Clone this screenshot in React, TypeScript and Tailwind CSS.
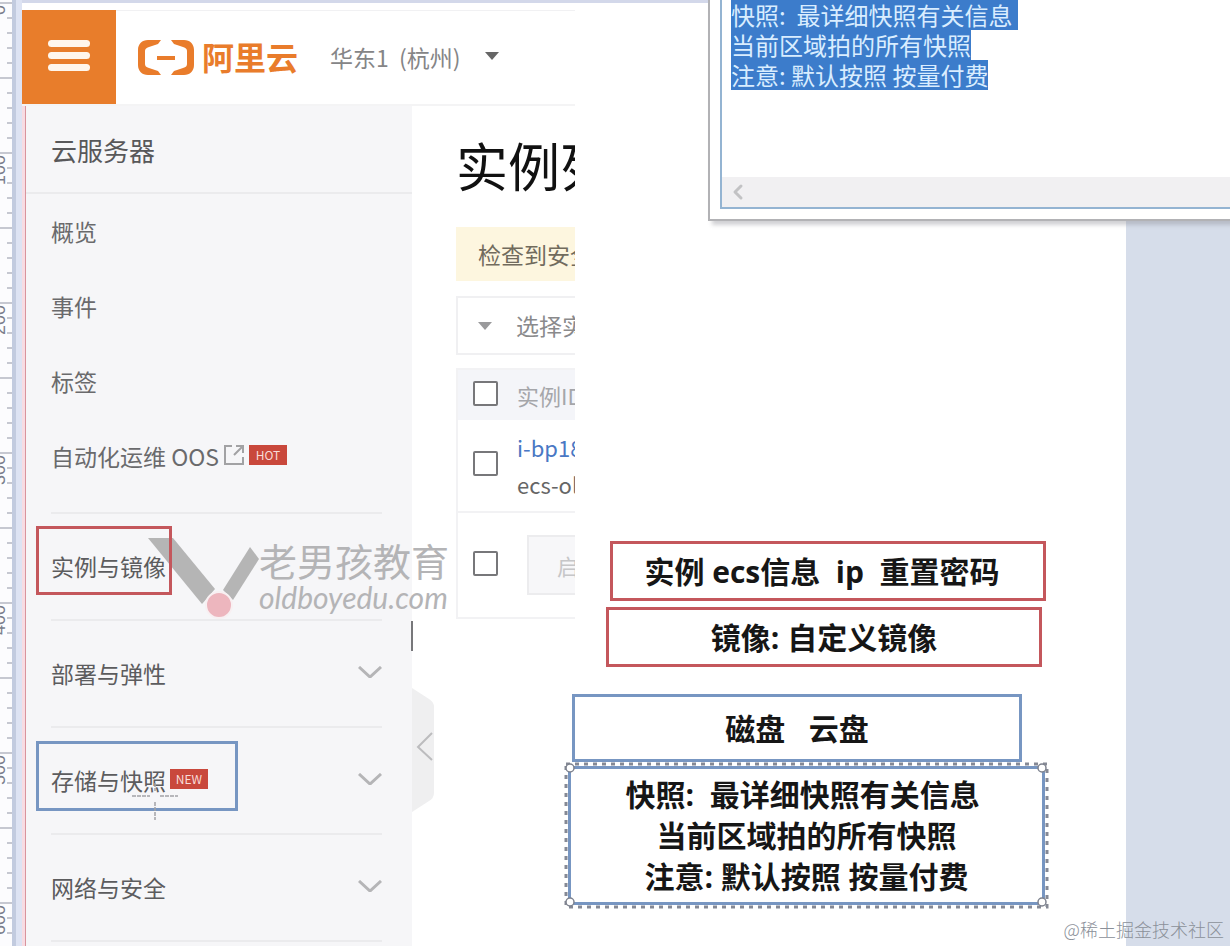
import { ChevronLeft } from 'lucide-react'
import { clsx } from 'clsx'
import React from 'react'

const NAV_ITEMS = [
    { label: '概览' },
    { label: '事件' },
    { label: '标签' },
    { label: '自动化运维 OOS', external: true, badge: 'HOT' },
]

const NAV_GROUPS = [
    { label: '实例与镜像', expandable: false },
    { label: '部署与弹性', expandable: true },
    { label: '存储与快照', expandable: true, badge: 'NEW' },
    { label: '网络与安全', expandable: true },
]

const NOTE_LINES = ['快照:  最详细快照有关信息 ', '当前区域拍的所有快照', '注意: 默认按照 按量付费']

const RULER_TICKS = Array.from({ length: 64 }, (_, i) => ({ y: 3 + i * 15, major: i % 5 === 0 }))
const RULER_LABELS = [0, 100, 200, 300, 400, 500, 600]

const Ruler = () => (
    <svg className="h-[946px] w-3 shrink-0" viewBox="0 0 12 946" aria-hidden="true">
        {RULER_TICKS.map(({ y, major }) => (
            <line key={y} x1={major ? 0 : 7} x2="12" y1={y} y2={y} stroke="#b4b7c2" strokeWidth="1.5" />
        ))}
        {RULER_LABELS.map((value, i) => (
            <text
                key={value}
                transform={`translate(5 ${i * 150 + 5}) rotate(-90)`}
                textAnchor="end"
                fontSize="18"
                fill="#7b7f8c"
                fontFamily="Liberation Sans, sans-serif"
            >
                {value}
            </text>
        ))}
    </svg>
)

const Badge = ({ children }: { children: React.ReactNode }) => (
    <span className="mb-1 flex h-5 w-[38px] items-center justify-center bg-[#c9483c] text-xs text-[#f8dcd8]">
        {children}
    </span>
)

const ExternalIcon = () => (
    <svg className="mb-1 h-[22px] w-[22px]" viewBox="0 0 22 22" fill="none" stroke="#a2a2a4" strokeWidth="2" aria-hidden="true">
        <path d="M9 2H2v18h18v-7" />
        <path d="M13 2h7v7M20 2l-9 9" />
    </svg>
)

const Logo = () => (
    <a href="#" aria-label="阿里云" className="flex items-center gap-2 text-[#e97c2b]">
        <svg className="h-9 w-14" viewBox="0 0 56 36" fill="currentColor" aria-hidden="true">
            <path d="M23 0H10C4 0 0 4 0 10v15c0 6 4 10 10 10h13l-3-4-9-3c-3-1-4-2-4-4V11c0-2 1-3 4-4l9-3z" />
            <path d="M33 0h13c6 0 10 4 10 10v15c0 6-4 10-10 10H33l3-4 9-3c3-1 4-2 4-4V11c0-2-1-3-4-4l-9-3z" />
            <path d="M19 16h18v4H19z" />
        </svg>
        <span className="pb-1 text-[32px] leading-9 font-bold">阿里云</span>
    </a>
)

const Header = () => (
    <header className="flex h-[106px] shrink-0 items-stretch border-b-2 border-[#f4f4f5] pt-[10px]">
        <button type="button" aria-label="菜单" className="flex w-[94px] flex-col items-center justify-center gap-[5px] bg-[#e87d2b] pb-1">
            <span className="h-[7px] w-[42px] rounded-sm bg-[#fff6ec]" />
            <span className="h-[7px] w-[42px] rounded-sm bg-[#fff6ec]" />
            <span className="h-[7px] w-[42px] rounded-sm bg-[#fff6ec]" />
        </button>
        <div className="flex flex-1 items-center border-t border-[#f1f1f3] pl-[22px]">
            <Logo />
            <button type="button" className="ml-8 flex items-center gap-6 text-[23px] text-[#858587]">
                <span className="whitespace-pre">华东1  (杭州)</span>
                <svg className="mb-1 h-2 w-[14px]" viewBox="0 0 14 8" aria-hidden="true">
                    <path d="M0 0h14L7 8z" fill="#666" />
                </svg>
            </button>
        </div>
    </header>
)

const Sidebar = () => (
    <aside className="w-[386px] shrink-0 bg-[#f6f6f8] text-[#6a6a6c]">
        <h2 className="flex h-[88px] items-center border-b-2 border-[#ebebed] pl-[25px] text-[26px] text-[#58585a]">
            云服务器
        </h2>
        <nav aria-label="云服务器" className="pr-[30px] pl-[25px] text-[23px]">
            <ul className="mb-[18px]">
                {NAV_ITEMS.map((item) => (
                    <li key={item.label}>
                        <a href="#" className="flex h-[75px] items-center gap-1">
                            {item.label}
                            {item.external && <ExternalIcon />}
                            {item.badge && <Badge>{item.badge}</Badge>}
                        </a>
                    </li>
                ))}
            </ul>
            <ul className="border-b-2 border-[#ebebed]">
                {NAV_GROUPS.map((group) => (
                    <li key={group.label} className="border-t-2 border-[#ebebed]">
                        <button type="button" className="flex h-[105px] w-full items-center gap-1 text-[#5c5c5e]">
                            {group.label}
                            {group.badge && <Badge>{group.badge}</Badge>}
                            {group.expandable && (
                                <svg className="mb-1 ml-auto h-3 w-6" viewBox="0 0 24 12" fill="none" stroke="#b5b5b7" strokeWidth="3" aria-hidden="true">
                                    <path d="M1 1l11 10L23 1" />
                                </svg>
                            )}
                        </button>
                    </li>
                ))}
            </ul>
        </nav>
    </aside>
)

const RowCheckbox = ({ label }: { label: string }) => (
    <input
        type="checkbox"
        aria-label={label}
        className="block size-[25px] appearance-none rounded-xs border-2 border-[#77777a] bg-white"
    />
)

const InstanceList = () => (
    <section className="min-w-0 flex-1 overflow-hidden pl-[44px] whitespace-nowrap">
        <h1 className="mt-[26px] h-[95px] text-[52px] leading-[66px] text-[#111]">实例列表</h1>
        <p className="flex h-[54px] items-center bg-[#fdf6df] pl-[22px] text-[23px] text-[#716b5d]">检查到安全组</p>
        <button
            type="button"
            className="mt-[15px] flex h-[59px] w-[300px] items-center gap-6 border-2 border-[#f0f0f2] pl-5 text-[23px] text-[#8a8a8c]"
        >
            <svg className="h-2 w-[14px]" viewBox="0 0 14 8" aria-hidden="true">
                <path d="M0 0h14L7 8z" fill="#9a9a9c" />
            </svg>
            选择实例
        </button>
        <table className="mt-[13px] w-[300px] border-collapse border-2 border-[#f2f2f4] text-left">
            <thead>
                <tr className="h-[51px] bg-[#f4f5f9]">
                    <th className="w-[60px] pb-1 pl-[15px]">
                        <RowCheckbox label="全选" />
                    </th>
                    <th className="text-[22px] font-normal text-[#a5a6aa]">实例ID</th>
                </tr>
            </thead>
            <tbody>
                <tr className="h-[92px] border-b-2 border-[#f2f2f4]">
                    <td className="pb-1 pl-[15px]">
                        <RowCheckbox label="选择实例" />
                    </td>
                    <td className="text-[22px] leading-[37px]">
                        <a href="#" className="block text-[#4a78c4]">i-bp18</a>
                        <span className="block text-[#666]">ecs-oldboy</span>
                    </td>
                </tr>
                <tr className="h-[106px]">
                    <td className="pb-1 pl-[15px]">
                        <RowCheckbox label="批量选择" />
                    </td>
                    <td className="pl-[10px]">
                        <button type="button" disabled className="h-[60px] w-[120px] border-2 border-[#ececee] bg-[#f7f7f9] pl-[28px] text-left text-[22px] text-[#c6c6c8]">
                            启动
                        </button>
                    </td>
                </tr>
            </tbody>
        </table>
    </section>
)

const NoteWindow = () => (
    <div className="absolute top-0 right-0 left-[708px] border-b-2 border-l-2 border-[#b2b2b5] bg-white pb-[10px] pl-[10px] shadow-[4px_4px_4px_#8c8c9466]">
        <div className="border-b-2 border-l-2 border-[#94b4d2]">
            <div
                role="textbox"
                aria-multiline="true"
                aria-label="备注"
                className="h-[177px] pl-[9px] text-[24px] leading-[30px] text-[#d9edff]"
            >
                {NOTE_LINES.map((line) => (
                    <p key={line} className="h-[30px] w-fit bg-[#3c7ccb] whitespace-pre">
                        {line}
                    </p>
                ))}
            </div>
            <div className="flex h-[30px] items-center bg-[#f1f0f2] pl-1">
                <button type="button" aria-label="向左滚动">
                    <ChevronLeft className="size-6 text-[#c2c2c4]" strokeWidth={3} />
                </button>
            </div>
        </div>
    </div>
)

type CalloutProps = {
    color: 'red' | 'blue'
    className: string
    children?: React.ReactNode
}

const Callout = ({ color, className, children }: CalloutProps) => (
    <div
        className={clsx(
            "absolute flex flex-col items-center justify-center border-3 font-['Open_Sans','Noto_Sans_CJK_SC',sans-serif] text-[30px] leading-[41px] font-bold whitespace-pre text-[#161616]",
            color === 'red' ? 'border-[#c4575c]' : 'border-[#7796c2]',
            className
        )}
    >
        {children}
    </div>
)

const SelectionFrame = () => (
    <svg className="absolute top-[761px] left-[563px] h-[150px] w-[488px]" viewBox="0 0 488 150" fill="none" aria-hidden="true">
        <rect x="3" y="3" width="481" height="143" stroke="#858995" strokeWidth="3" strokeDasharray="4 5" />
        {[[7, 7], [479, 7], [7, 141], [479, 141]].map(([cx, cy]) => (
            <circle key={`${cx}-${cy}`} cx={cx} cy={cy} r="4" fill="#fff" stroke="#7d828e" strokeWidth="1.5" />
        ))}
    </svg>
)

const SchoolWatermark = () => (
    <div className="pointer-events-none absolute top-[536px] left-[147px] flex items-start text-[#b4b4b6]">
        <svg className="h-[84px] w-[112px]" viewBox="0 0 112 84" aria-hidden="true">
            <path d="M1 2h25l42 51-13 15z" fill="#b5b5b5" />
            <path d="M103 11l9 12-26 41-10-10z" fill="#b5b5b5" />
            <circle cx="72" cy="69" r="13" fill="#edb6be" stroke="#f8f0f2" strokeWidth="2" />
        </svg>
        <div className="pt-1">
            <p className="text-[38px] leading-[40px]">老男孩教育</p>
            <p className="font-['Lato',sans-serif] text-[30px] leading-[34px] italic">oldboyedu.com</p>
        </div>
    </div>
)

export default function App() {
    return (
        <div className="relative flex min-h-screen w-full items-stretch overflow-hidden bg-white font-['Noto_Sans_CJK_SC',sans-serif]">
            <div className="w-3 shrink-0 bg-[#fcfcfe]">
                <Ruler />
            </div>
            <div className="w-1 shrink-0 bg-[#c2cbdf]" />
            <div className="w-[6px] shrink-0 bg-[#dde3f3]" />

            <div className="flex w-[553px] shrink-0 flex-col border-t-3 border-[#d3d8ea]">
                <div className="-mt-[3px] flex flex-1 flex-col">
                    <Header />
                    <div className="flex flex-1">
                        <div className="w-[3px] shrink-0 bg-[#f7dce3]" />
                        <div className="w-px shrink-0 bg-[#d9949d]" />
                        <Sidebar />
                        <InstanceList />
                    </div>
                </div>
            </div>
            <main className="flex-1 border-t-3 border-[#d3d8ea]" />
            <div className="w-[104px] shrink-0 bg-[#d6ddea]" />

            <NoteWindow />

            {/* sidebar collapse handle */}
            <button type="button" aria-label="收起" className="absolute top-[688px] left-[412px]">
                <svg className="h-[124px] w-[22px]" viewBox="0 0 22 124" fill="none" aria-hidden="true">
                    <path d="M0 0l17 11q5 3 5 8v86q0 5-5 8L0 124z" fill="#efeff0" />
                    <path d="M20 45L6 59l14 13" stroke="#bcbcbe" strokeWidth="2" />
                </svg>
            </button>

            <SchoolWatermark />
            <div className="absolute top-[621px] left-[411px] h-[30px] w-[2px] bg-[#77777a]" />

            <Callout color="red" className="top-[526px] left-[36px] h-[69px] w-[136px]" />
            <Callout color="blue" className="top-[741px] left-[36px] h-[70px] w-[202px]" />
            <Callout color="red" className="top-[541px] left-[610px] h-[60px] w-[436px] pr-3">
                {'实例 ecs信息  ip  重置密码'}
            </Callout>
            <Callout color="red" className="top-[607px] left-[606px] h-[60px] w-[436px]">
                镜像: 自定义镜像
            </Callout>
            <Callout color="blue" className="top-[694px] left-[572px] h-[68px] w-[450px]">
                {'磁盘   云盘'}
            </Callout>
            <Callout color="blue" className="top-[766px] left-[568px] h-[139px] w-[477px]">
                {NOTE_LINES.map((line) => (
                    <p key={line}>{line}</p>
                ))}
            </Callout>
            <SelectionFrame />

            {/* crosshair pointer */}
            <svg className="absolute top-[780px] left-[131px] h-10 w-12" viewBox="0 0 48 40" stroke="#a3a3a6" strokeWidth="1.5" aria-hidden="true">
                <path d="M1 16h18M29 16h18M24 3v8M24 22v18" strokeDasharray="4 1" />
            </svg>

            <p className="absolute right-[6px] bottom-[3px] text-[18px] leading-[27px] font-light text-[#8b9099]">
                @稀土掘金技术社区
            </p>
        </div>
    )
}
